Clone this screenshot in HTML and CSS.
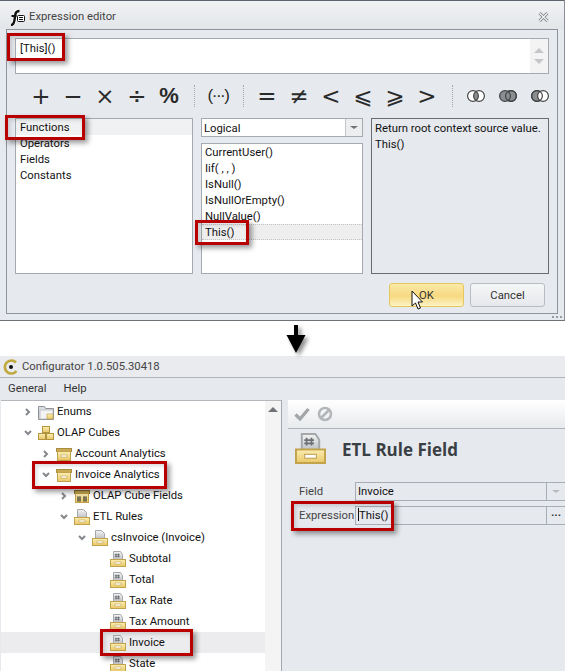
FILE: index.html
```html
<!DOCTYPE html>
<html lang="en">
  <head>
    <title>Expression editor</title>
    <meta charset="UTF-8" />
    <link rel="stylesheet" href="styles.css">
  </head>
  <body>
    <svg class="defs" width="0" height="0">
      <defs>
        <linearGradient id="yellow" x1="0" y1="0" x2="0" y2="1">
          <stop offset="0" stop-color="#fbeeb4" />
          <stop offset="1" stop-color="#e9c766" />
        </linearGradient>
        <linearGradient id="paper" x1="0" y1="0" x2="0" y2="1">
          <stop offset="0" stop-color="#f4f4f4" />
          <stop offset="1" stop-color="#b9bcc0" />
        </linearGradient>
        <symbol id="tray" viewBox="0 0 16 16">
          <path d="M3.5 .5h6l3 3v6h-9z" fill="url(#paper)" stroke="#a4a7ab" />
          <rect x=".5" y="8.5" width="15" height="7" fill="url(#yellow)" stroke="#c2a24a" />
          <rect x="5" y="11" width="6" height="2" fill="#fff" stroke="#b89a4a" stroke-width=".5" />
        </symbol>
        <symbol id="fieldtray" viewBox="0 0 16 16">
          <path d="M3.5 .5h7l2 3v6h-9z" fill="url(#paper)" stroke="#a4a7ab" />
          <path d="M6 2.5v4M8.5 2.5v4M4.8 3.7h5M4.8 5.3h5" stroke="#6d7075" stroke-width=".9" />
          <rect x=".5" y="8.5" width="15" height="7" fill="url(#yellow)" stroke="#c2a24a" />
          <rect x="5" y="11" width="6" height="2" fill="#fff" stroke="#b89a4a" stroke-width=".5" />
        </symbol>
        <symbol id="box" viewBox="0 0 16 16">
          <rect x=".5" y="2.5" width="15" height="3" fill="#c9a951" stroke="#a98d42" />
          <rect x="1.5" y="5.5" width="13" height="9" fill="url(#yellow)" stroke="#c2a24a" />
          <rect x="5" y="9" width="6" height="2" fill="#fff" stroke="#b89a4a" stroke-width=".5" />
        </symbol>
        <symbol id="chev-right" viewBox="0 0 8 8">
          <path d="M2 1l3 3-3 3" fill="none" stroke="#85888c" stroke-width="2" />
        </symbol>
        <symbol id="chev-down" viewBox="0 0 8 8">
          <path d="M1 2l3 3 3-3" fill="none" stroke="#85888c" stroke-width="2" />
        </symbol>
      </defs>
    </svg>

    <div class="dialog">
      <div class="dialog-title">
        <svg class="title-icon" width="16" height="17" viewBox="0 0 16 17">
          <path d="M2 16c2.500 0 3-2 3.500-5l.8-5.500c.3-2 1.500-3.500 4.200-3.500" fill="none" stroke="#fff" stroke-width="4" />
          <path d="M2 16c2.500 0 3-2 3.500-5l.8-5.500c.3-2 1.500-3.500 4.200-3.500" fill="none" stroke="#111" stroke-width="2.400" />
          <path d="M2.500 7h5" stroke="#111" stroke-width="2" />
          <rect x="8.500" y="6.500" width="7" height="6" rx="1" fill="#fff" stroke="#111" />
          <path d="M10 8.500h4M10 10.500h4" stroke="#111" />
        </svg>
        <span class="dialog-name">Expression editor</span>
        <svg class="close" width="11" height="10" viewBox="0 0 11 10">
          <path d="M1.500 1l8 8M9.500 1l-8 8" stroke="#7b8085" stroke-width="3" />
          <path d="M1.500 1l8 8M9.500 1l-8 8" stroke="#f2f3f5" stroke-width="1.400" />
        </svg>
      </div>

      <div class="panel">
        <div class="editor">
          <div class="editor-text">[This]()</div>
          <div class="editor-scroll">
            <span class="arrow-up"></span>
            <span class="arrow-down"></span>
          </div>
        </div>

        <div class="ops">
          <span class="op">+</span>
          <span class="op">−</span>
          <span class="op">×</span>
          <span class="op">÷</span>
          <span class="op op-bold">%</span>
          <span class="sep"></span>
          <span class="op op-small">(···)</span>
          <span class="sep"></span>
          <span class="op">=</span>
          <span class="op">≠</span>
          <span class="op">&lt;</span>
          <span class="op">⩽</span>
          <span class="op">⩾</span>
          <span class="op">&gt;</span>
          <span class="sep"></span>
          <span class="op">
            <svg width="18" height="14" viewBox="0 0 18 14">
              <circle cx="6" cy="7" r="5.400" fill="#fff" />
              <circle cx="12" cy="7" r="5.400" fill="#fff" />
              <path d="M9 2.500a5.400 5.400 0 0 1 0 9a5.400 5.400 0 0 1 0-9z" fill="#8b8e90" />
              <circle cx="6" cy="7" r="5.400" fill="none" stroke="#444" stroke-width="1.200" />
              <circle cx="12" cy="7" r="5.400" fill="none" stroke="#444" stroke-width="1.200" />
            </svg>
          </span>
          <span class="op">
            <svg width="18" height="14" viewBox="0 0 18 14">
              <circle cx="12" cy="7" r="5.400" fill="#8b8e90" stroke="#444" stroke-width="1.200" />
              <circle cx="6" cy="7" r="5.400" fill="#8b8e90" stroke="#444" stroke-width="1.200" />
              <circle cx="12" cy="7" r="5.400" fill="none" stroke="#444" stroke-width="1.200" />
            </svg>
          </span>
          <span class="op">
            <svg width="18" height="14" viewBox="0 0 18 14">
              <circle cx="6" cy="7" r="5.400" fill="#8b8e90" stroke="#444" stroke-width="1.200" />
              <circle cx="12" cy="7" r="5.400" fill="#fff" stroke="#444" stroke-width="1.200" />
              <circle cx="6" cy="7" r="5.400" fill="none" stroke="#444" stroke-width="1.200" />
            </svg>
          </span>
        </div>

        <div class="columns">
          <ul class="list list-cats">
            <li class="cat-selected">Functions</li>
            <li>Operators</li>
            <li>Fields</li>
            <li>Constants</li>
          </ul>
          <div class="middle">
            <div class="combo">
              <span class="combo-text">Logical</span>
              <span class="combo-btn"><span class="arrow-small"></span></span>
            </div>
            <ul class="list list-funcs">
              <li>CurrentUser()</li>
              <li>Iif( , , )</li>
              <li>IsNull()</li>
              <li>IsNullOrEmpty()</li>
              <li>NullValue()</li>
              <li class="func-selected">This()</li>
            </ul>
          </div>
          <div class="description">Return root context source value.<br>This()</div>
        </div>

        <div class="buttons">
          <span class="btn btn-hover">OK</span>
          <span class="btn">Cancel</span>
        </div>
      </div>
      <div class="grip"></div>
    </div>

    <div class="between">
      <svg class="big-arrow" width="20" height="28" viewBox="0 0 20 28">
        <path d="M8 0h4v10h7.500L10 28 .5 10H8z" fill="#000" />
      </svg>
    </div>

    <div class="app">
      <div class="app-title">
        <svg width="16" height="16" viewBox="0 0 16 16">
          <path d="M13 3.500A6.500 6.500 0 1 0 13.500 12" fill="none" stroke="#c0a93c" stroke-width="2.600" />
          <circle cx="8" cy="8" r="2" fill="#111" />
        </svg>
        <span>Configurator 1.0.505.30418</span>
      </div>
      <div class="menu">
        <span>General</span>
        <span>Help</span>
      </div>
      <div class="app-body">
        <div class="tree">
          <div class="tree-rows">
            <div class="row lvl0"><svg class="chev"><use href="#chev-right" /></svg>
              <svg class="ico" viewBox="0 0 16 16">
                <path d="M.5 2.500h6l1 2h8v11H.5z" fill="#dcdfe2" stroke="#8e9296" />
                <rect x="2" y="6" width="13" height="9" fill="#f3f3f3" stroke="#a6a9ad" stroke-width=".6" />
                <rect x="9" y="10" width="6" height="5" fill="url(#yellow)" stroke="#b89a4a" stroke-width=".6" />
              </svg>Enums</div>
            <div class="row lvl0"><svg class="chev"><use href="#chev-down" /></svg>
              <svg class="ico" viewBox="0 0 16 16">
                <rect x="4.500" y="1.500" width="7" height="6" fill="url(#yellow)" stroke="#b3953f" />
                <rect x=".5" y="8.500" width="7" height="6" fill="url(#yellow)" stroke="#b3953f" />
                <rect x="8.500" y="8.500" width="7" height="6" fill="url(#yellow)" stroke="#b3953f" />
              </svg>OLAP Cubes</div>
            <div class="row lvl1"><svg class="chev"><use href="#chev-right" /></svg><svg class="ico"><use href="#box" /></svg>Account Analytics</div>
            <div class="row lvl1"><svg class="chev"><use href="#chev-down" /></svg><svg class="ico"><use href="#box" /></svg>Invoice Analytics</div>
            <div class="row lvl2"><svg class="chev"><use href="#chev-right" /></svg>
              <svg class="ico" viewBox="0 0 16 16">
                <rect x=".5" y="2.500" width="15" height="3" fill="#c9a951" stroke="#8d7736" />
                <rect x="1.500" y="5.500" width="13" height="9" fill="url(#yellow)" stroke="#c2a24a" />
                <path d="M4 8v6M6 8v6M3 10h4M3 12h4M10 8v6M12 8v6M9 10h4M9 12h4" stroke="#4a4a3c" stroke-width=".9" />
              </svg>OLAP Cube Fields</div>
            <div class="row lvl2"><svg class="chev"><use href="#chev-down" /></svg><svg class="ico"><use href="#tray" /></svg>ETL Rules</div>
            <div class="row lvl3"><svg class="chev"><use href="#chev-down" /></svg><svg class="ico"><use href="#tray" /></svg>csInvoice (Invoice)</div>
            <div class="row lvl4"><svg class="ico"><use href="#fieldtray" /></svg>Subtotal</div>
            <div class="row lvl4"><svg class="ico"><use href="#fieldtray" /></svg>Total</div>
            <div class="row lvl4"><svg class="ico"><use href="#fieldtray" /></svg>Tax Rate</div>
            <div class="row lvl4"><svg class="ico"><use href="#fieldtray" /></svg>Tax Amount</div>
            <div class="row lvl4 row-selected"><svg class="ico"><use href="#fieldtray" /></svg>Invoice</div>
            <div class="row lvl4"><svg class="ico"><use href="#fieldtray" /></svg>State</div>
          </div>
          <div class="tree-scroll"><span class="arrow-up arrow-dark"></span></div>
        </div>

        <div class="detail">
          <div class="toolbar">
            <svg width="16" height="14" viewBox="0 0 16 14">
              <path d="M1.500 7.500l4.500 4.500 8.500-10" fill="none" stroke="#a3a6a9" stroke-width="3.200" />
            </svg>
            <svg width="16" height="16" viewBox="0 0 16 16">
              <circle cx="8" cy="8" r="6" fill="none" stroke="#b4b7ba" stroke-width="2.600" />
              <path d="M4 12l8-8" stroke="#b4b7ba" stroke-width="2.600" />
            </svg>
          </div>
          <div class="detail-head">
            <svg class="detail-icon" viewBox="0 0 16 16"><use href="#fieldtray" /></svg>
            <span class="detail-title">ETL Rule Field</span>
          </div>
          <div class="form">
            <div class="form-row">
              <label>Field</label>
              <div class="input">
                <span class="input-text">Invoice</span>
                <span class="input-btn"><span class="arrow-small arrow-light"></span></span>
              </div>
            </div>
            <div class="form-row">
              <label>Expression</label>
              <div class="input">
                <span class="input-text"><span class="caret"></span>This()</span>
                <span class="input-btn input-dots">···</span>
              </div>
            </div>
          </div>
        </div>
      </div>
    </div>

    <!-- red annotation boxes and the mouse pointer lie over the screenshot -->
    <div class="mark mark-editor"></div>
    <div class="mark mark-functions"></div>
    <div class="mark mark-this"></div>
    <div class="mark mark-cube"></div>
    <div class="mark mark-invoice"></div>
    <div class="mark mark-expr"></div>
    <svg class="pointer" width="13" height="20" viewBox="0 0 13 20">
      <path d="M1 1v15l3.500-3 2.500 6 2.500-1-2.500-6h4.500z" fill="#fff" stroke="#111" />
    </svg>
  </body>
</html>
```

FILE: styles.css
```css
html, body {
  margin: 0;
  padding: 0;
  height: 100%;
  overflow: hidden;
  background-color: white;
  color: #111;
}
body {
  position: relative;
  width: 565px;
  height: 671px;
  font-family: Roboto, "Open Sans", sans-serif;
  font-size: 11.3px;
  line-height: 16px;
}
ul {
  list-style: none;
  margin: 0;
  padding: 0;
}
.defs {
  position: absolute;
}

/* dialog */
.dialog {
  position: relative;
  height: 319px;
  box-sizing: content-box;
  background: #e6e9ee;
  border-top: 1px solid #5f656c;
  border-bottom: 1px solid #6d7277;
  border-right: 1px solid #8a8f95;
}
.dialog-title {
  display: flex;
  align-items: center;
  height: 24px;
  padding: 4px 15px 0 9px;
  background: linear-gradient(#f0f2f4, #e2e5e9);
  color: #444;
}
.title-icon {
  margin-right: 4px;
}
.dialog-name {
  flex: 1;
}
.panel {
  margin: 0 6px;
  padding: 8px 8px 0;
  height: 275px;
  background: #e6e9ee;
  border: 1px solid #8e949b;
}
.editor {
  display: flex;
  height: 34px;
  background: white;
  border: 1px solid #a5aab1;
}
.editor-text {
  flex: 1;
  padding: 2px 4px;
}
.editor-scroll {
  width: 18px;
  display: flex;
  flex-direction: column;
  align-items: center;
  justify-content: space-around;
  padding: 6px 0;
  box-sizing: border-box;
  background: #f3f3f4;
}
.arrow-up {
  width: 0;
  height: 0;
  border: 5px solid transparent;
  border-top: 0;
  border-bottom: 5px solid #c4c6c9;
}
.arrow-down {
  width: 0;
  height: 0;
  border: 5px solid transparent;
  border-bottom: 0;
  border-top: 5px solid #c4c6c9;
}
.arrow-dark {
  border-bottom-color: #6f7276;
}
.ops {
  display: flex;
  align-items: center;
  height: 44px;
  padding-left: 10px;
}
.op {
  flex: none;
  width: 32px;
  text-align: center;
  font-family: "DejaVu Sans", sans-serif;
  font-size: 23px;
  line-height: 28px;
  color: #2a2a2a;
  display: flex;
  justify-content: center;
  align-items: center;
}
.op-bold {
  font-family: "Liberation Sans", sans-serif;
  font-size: 22px;
  font-weight: bold;
}
.op-small {
  font-size: 17px;
  font-family: "Liberation Sans", sans-serif;
  letter-spacing: -1.5px;
}
.sep {
  flex: none;
  width: 0;
  height: 22px;
  margin: 0 7px 0 9px;
  border-left: 1px dotted #a5a9ae;
}
.columns {
  display: flex;
  gap: 8px;
  height: 156px;
}
.list {
  box-sizing: border-box;
  background: white;
  border: 1px solid #a5aab1;
}
.list-cats {
  width: 178px;
}
.list-cats li {
  height: 16px;
  line-height: 18px;
  padding-left: 4px;
}
.cat-selected {
  background: #f0f1f2;
}
.middle {
  width: 162px;
  display: flex;
  flex-direction: column;
  gap: 6px;
}
.combo {
  display: flex;
  height: 19px;
  box-sizing: border-box;
  background: white;
  border: 1px solid #a5aab1;
}
.combo-text {
  flex: 1;
  padding-left: 2px;
  line-height: 19px;
}
.combo-btn {
  width: 16px;
  background: #eceef0;
  border-left: 1px solid #c3c7cc;
  display: flex;
  align-items: center;
  justify-content: center;
}
.arrow-small {
  width: 0;
  height: 0;
  border: 4px solid transparent;
  border-bottom: 0;
  border-top: 3px solid #6f7276;
}
.arrow-light {
  border-top-color: #b7bbbf;
}
.list-funcs {
  flex: 1;
}
.list-funcs li {
  height: 16px;
  line-height: 18px;
  padding-left: 3px;
}
.list-funcs .func-selected {
  background: #eeeeee;
  border-top: 1px dotted #c4c4c4;
  border-bottom: 1px dotted #c4c4c4;
  height: 14px;
  line-height: 16px;
}
.description {
  flex: 1;
  padding: 2px 3px;
  background: #e6e9ee;
  border: 1px solid #6a6e73;
}
.buttons {
  display: flex;
  justify-content: flex-end;
  gap: 6px;
  margin-top: 9px;
  padding-right: 4px;
}
.btn {
  width: 73px;
  height: 22px;
  line-height: 24px;
  text-align: center;
  border: 1px solid #b9bdc3;
  border-radius: 3px;
  color: #333;
  background: linear-gradient(#f5f6f7, #e6e8ec);
}
.btn-hover {
  border-color: #e6c75e;
  background: linear-gradient(#fbe9a8, #f7d981 55%, #fdf3c6);
}
.grip {
  position: absolute;
  right: 2px;
  bottom: 2px;
  width: 10px;
  height: 2px;
  background: repeating-linear-gradient(90deg, #9a9ea3 0 2px, transparent 2px 4px);
}
.between {
  height: 35px;
  display: flex;
  justify-content: center;
  padding-left: 27px;
  box-sizing: border-box;
}
.big-arrow {
  margin-top: 4px;
  filter: drop-shadow(3px 3px 2px rgba(0, 0, 0, 0.45));
}

/* configurator */
.app {
  height: 315px;
  display: flex;
  flex-direction: column;
  background: #e6e9ee;
}
.app-title {
  display: flex;
  align-items: center;
  gap: 3px;
  height: 20px;
  padding: 1px 0 0 3px;
  color: #444;
  background: #e9ebee;
  border-bottom: 1px solid #b0b4b9;
}
.menu {
  display: flex;
  gap: 17px;
  height: 22px;
  padding-left: 8px;
  line-height: 22px;
  color: #333;
}
.app-body {
  flex: 1;
  display: flex;
  min-height: 0;
}
.tree {
  display: flex;
  width: 280px;
  margin-left: 1px;
  background: white;
  border-top: 1px solid #b4b8bd;
  border-right: 1px solid #a5aab1;
  overflow: hidden;
}
.tree-rows {
  flex: 1;
}
.tree-scroll {
  width: 16px;
  display: flex;
  justify-content: center;
  padding-top: 6px;
  background: #f4f4f5;
  box-sizing: border-box;
}
.row {
  display: flex;
  align-items: center;
  height: 21px;
  white-space: nowrap;
}
.lvl0 { padding-left: 23px; }
.lvl1 { padding-left: 41px; }
.lvl2 { padding-left: 59px; }
.lvl3 { padding-left: 77px; }
.lvl4 { padding-left: 109px; }
.chev {
  width: 8px;
  height: 8px;
  margin-right: 6px;
}
.ico {
  width: 16px;
  height: 16px;
  margin-right: 3px;
  flex: none;
}
.row-selected {
  background: #ececee;
}
.detail {
  flex: 1;
  margin-left: 6px;
}
.toolbar {
  display: flex;
  align-items: center;
  gap: 7px;
  height: 28px;
  padding-left: 6px;
  background: linear-gradient(#ffffff, #e8eaed);
  border-bottom: 1px solid #b0b4b9;
}
.detail-head {
  display: flex;
  align-items: center;
  height: 38px;
  padding-left: 7px;
}
.detail-icon {
  width: 31px;
  height: 31px;
  margin-right: 16px;
}
.detail-title {
  padding-top: 3px;
  font-family: "Open Sans", sans-serif;
  font-size: 17px;
  font-weight: bold;
  color: #3a3f44;
}
.form {
  display: flex;
  flex-direction: column;
  gap: 5px;
  margin-top: 15px;
  padding-left: 11px;
}
.form-row {
  display: flex;
  align-items: center;
}
.form-row label {
  width: 56px;
  color: #444;
}
.input {
  flex: 1;
  display: flex;
  height: 19px;
  box-sizing: border-box;
  border: 1px solid #a8adb3;
  border-right: 0;
}
.input-text {
  flex: 1;
  padding-left: 2px;
  line-height: 17px;
}
.input-btn {
  width: 18px;
  display: flex;
  align-items: center;
  justify-content: center;
  border-left: 1px solid #a8adb3;
}
.input-dots {
  font-weight: bold;
  color: #333;
}
.caret {
  display: inline-block;
  width: 1px;
  height: 13px;
  background: #111;
  vertical-align: -2px;
}

/* annotations */
.mark {
  position: absolute;
  box-sizing: border-box;
  border: 3px solid #b80000;
  box-shadow: 3px 3px 5px rgba(0, 0, 0, 0.4), inset 2px 2px 4px rgba(0, 0, 0, 0.15);
}
.mark-editor { left: 7px; top: 33px; width: 58px; height: 28px; }
.mark-functions { left: 5px; top: 115px; width: 80px; height: 25px; }
.mark-this { left: 195px; top: 220px; width: 54px; height: 25px; }
.mark-cube { left: 32px; top: 461px; width: 135px; height: 28px; }
.mark-invoice { left: 100px; top: 629px; width: 93px; height: 27px; }
.mark-expr { left: 291px; top: 501px; width: 103px; height: 30px; }
.pointer {
  position: absolute;
  left: 411px;
  top: 290px;
}
```
